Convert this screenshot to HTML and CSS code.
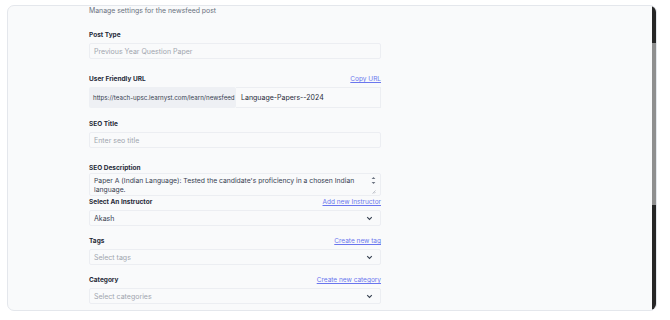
FILE: index.html
```html
<!DOCTYPE html>
<html lang="en">
<head>
    <meta charset="UTF-8">
    <meta name="viewport" content="width=device-width, initial-scale=1.0">
    <title>Newsfeed Post Settings</title>
    <link rel="stylesheet" href="styles.css">
</head>
<body>
    <section class="settings-panel">
        <div class="settings-form">
            <p class="subtitle">Manage settings for the newsfeed post</p>

            <div class="field">
                <div class="field-label"><label>Post Type</label></div>
                <div class="input placeholder">Previous Year Question Paper</div>
            </div>

            <div class="field">
                <div class="field-label"><label>User Friendly URL</label><a href="#" class="link">Copy URL</a></div>
                <div class="url-row">
                    <span class="url-prefix">https://teach-upsc.learnyst.com/learn/newsfeed</span>
                    <span class="url-slug">Language-Papers--2024</span>
                </div>
            </div>

            <div class="field field-compact">
                <div class="field-label"><label>SEO Title</label></div>
                <div class="input placeholder">Enter seo title</div>
            </div>

            <div class="field field-tight">
                <div class="field-label"><label>SEO Description</label></div>
                <div class="textarea">
                    <span class="textarea-text">Paper A (Indian Language): Tested the candidate's proficiency in a chosen Indian language.</span>
                    <span class="textarea-controls">
                        <svg width="5" height="9" viewBox="0 0 5 9"><path d="M0.6 3 L2.5 0.9 L4.4 3 Z M0.6 6 L2.5 8.1 L4.4 6 Z" fill="#6b7280"/></svg>
                        <svg width="4" height="4" viewBox="0 0 4 4"><path d="M3.5 0.5 L0.5 3.5 M3.5 2 L2 3.5" stroke="#9ca3af" stroke-width="0.6"/></svg>
                    </span>
                </div>
            </div>

            <div class="field">
                <div class="field-label"><label>Select An Instructor</label><a href="#" class="link">Add new Instructor</a></div>
                <div class="input select">
                    <span>Akash</span>
                    <svg class="chevron" width="7" height="5" viewBox="0 0 7 5"><path d="M1.2 1.2 L3.5 3.5 L5.8 1.2" fill="none" stroke="#374151" stroke-width="1.1"/></svg>
                </div>
            </div>

            <div class="field field-narrow">
                <div class="field-label"><label>Tags</label><a href="#" class="link">Create new tag</a></div>
                <div class="input select placeholder">
                    <span>Select tags</span>
                    <svg class="chevron" width="7" height="5" viewBox="0 0 7 5"><path d="M1.2 1.2 L3.5 3.5 L5.8 1.2" fill="none" stroke="#374151" stroke-width="1.1"/></svg>
                </div>
            </div>

            <div class="field field-narrow">
                <div class="field-label"><label>Category</label><a href="#" class="link">Create new category</a></div>
                <div class="input select placeholder">
                    <span>Select categories</span>
                    <svg class="chevron" width="7" height="5" viewBox="0 0 7 5"><path d="M1.2 1.2 L3.5 3.5 L5.8 1.2" fill="none" stroke="#374151" stroke-width="1.1"/></svg>
                </div>
            </div>
        </div>

        <div class="scrollbar"><div class="scrollbar-thumb"></div></div>
    </section>
</body>
</html>
```

FILE: styles.css
```css
body {
    font-family: Inter, "Noto Sans", sans-serif;
    background-color: #ffffff;
    color: #1f2937;
    margin: 0;
    padding: 5px 13px 7px 7px;
}

.settings-panel {
    position: relative;
    height: 306px;
    background-color: #f9fafb;
    border: 1px solid #e4e7ec;
    border-radius: 7px;
    box-sizing: border-box;
    overflow: hidden;
}

.settings-form {
    width: 292px;
    margin-left: 81px;
    padding-top: 1px;
}

.subtitle {
    margin: 0;
    font-size: 6.9px;
    line-height: 8px;
    color: #6b7280;
}

.field {
    margin-top: 15px;
}

.field-compact {
    margin-top: 11px;
}

.field-narrow {
    margin-top: 10px;
}

.field-tight + .field {
    margin-top: 1px;
}

.field-label {
    display: flex;
    justify-content: space-between;
    align-items: center;
    height: 10px;
    margin-bottom: 3px;
}

.field-label label {
    font-size: 6.5px;
    font-weight: 700;
    color: #1f2937;
}

.link {
    font-size: 6.5px;
    color: #6a76ee;
    text-decoration: underline;
}

.input {
    height: 16px;
    box-sizing: border-box;
    border: 1px solid #eceef2;
    border-radius: 2px;
    background-color: #f9fafb;
    padding: 0 4px;
    font-size: 7px;
    color: #374151;
    display: flex;
    align-items: center;
}

.placeholder {
    color: #a0a5ae;
}

.select {
    justify-content: space-between;
}

.chevron {
    margin-right: 3px;
}

.url-row {
    display: flex;
    height: 21px;
}

.url-prefix {
    display: flex;
    align-items: center;
    width: 147px;
    box-sizing: border-box;
    padding-left: 4px;
    background-color: #eef0f4;
    border-radius: 2px;
    font-size: 6.2px;
    color: #374151;
}

.url-slug {
    flex: 1;
    display: flex;
    align-items: center;
    padding-left: 5px;
    border: 1px solid #eceef2;
    border-left: none;
    font-size: 7px;
    color: #1f2937;
}

.textarea {
    display: flex;
    height: 23px;
    box-sizing: border-box;
    border: 1px solid #eceef2;
    border-radius: 2px;
    padding: 2px 4px 1px 4px;
    margin-top: -3px;
}

.textarea-text {
    flex: 1;
    font-size: 6.8px;
    line-height: 9px;
    color: #374151;
}

.textarea-controls {
    display: flex;
    flex-direction: column;
    justify-content: space-between;
    align-items: flex-end;
    padding-left: 6px;
}

.scrollbar {
    position: absolute;
    top: 0;
    right: 0;
    bottom: 0;
    width: 4px;
    background-color: #262626;
    border-radius: 0 7px 7px 0;
}

.scrollbar-thumb {
    margin-top: 37px;
    height: 162px;
    background-color: #8f8f8f;
}
```
